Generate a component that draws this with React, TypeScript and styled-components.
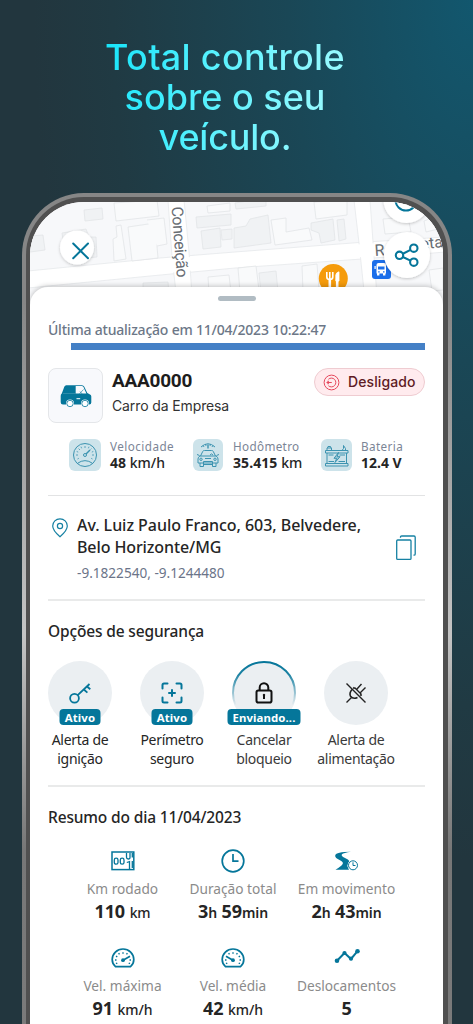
import React from "react";
import styled, { createGlobalStyle } from "styled-components";

const teal = "#05769a";
const noto = `"Noto Sans", sans-serif`;
const inter = `Inter, sans-serif`;
const roboto = `Roboto, sans-serif`;

const GlobalStyle = createGlobalStyle`
  * { box-sizing: border-box; }
  body { margin: 0; background: #22353d; }
`;

const Page = styled.main`
  height: 1024px;
  overflow: hidden;
  display: flex;
  flex-direction: column;
  background: radial-gradient(ellipse 440px 860px at 100% 0, #12576e 0%, #1a4756 42%, #203a43 82%, #22363e 100%);
  font-family: ${noto};
`;

const Headline = styled.h1`
  flex: none;
  margin: 37px 0 0;
  width: 450px;
  height: 156px;
  text-align: center;
  font-family: ${inter};
  font-weight: 500;
  font-size: 36px;
  line-height: 40px;

  span {
    display: block;
    width: 250px;
    margin: 0 auto;
    background: linear-gradient(100deg, #14e4fa 0%, #55f1fe 42%, #93f9ff 85%);
    -webkit-background-clip: text;
    background-clip: text;
    color: transparent;
  }
`;

const HeadlineLine = styled.div<{ $spacing: number }>`
  letter-spacing: ${(p) => p.$spacing}px;
  white-space: nowrap;
`;

const Phone = styled.section`
  width: 430px;
  height: 900px;
  flex: none;
  margin-left: 22px;
  padding: 4px;
  border-radius: 62px 62px 0 0;
  background: linear-gradient(#868686 0%, #868686 12%, #c4c4c4 49%, #777 73%, #7c7c7c 100%);
`;

const Bezel = styled.div`
  height: 100%;
  padding: 5px 5px 0 4px;
  border-radius: 58px 58px 0 0;
  background: #505050;
`;

const Screen = styled.div`
  width: 413px;
  height: 100%;
  overflow: hidden;
  border-radius: 54px 54px 0 0;
  background: #f7f8fa;
`;

const MapArea = styled.div`
  height: 85px;
  svg { display: block; }
`;

const Sheet = styled.div`
  position: relative;
  height: 800px;
  padding: 9px 18px 0;
  border-radius: 18px 18px 0 0;
  background: #fff;
  box-shadow: 0 -1px 5px rgba(0, 0, 0, 0.22);
`;

const Handle = styled.div`
  width: 38px;
  height: 5px;
  margin: 0 auto;
  border-radius: 3px;
  background: #b1bcc3;
`;

const Txt = styled.div<{
  $size: number;
  $line: number;
  $color?: string;
  $weight?: number;
  $ls?: number;
  $family?: string;
}>`
  font-family: ${(p) => p.$family ?? noto};
  font-size: ${(p) => p.$size}px;
  line-height: ${(p) => p.$line}px;
  color: ${(p) => p.$color ?? "#252525"};
  font-weight: ${(p) => p.$weight ?? 400};
  letter-spacing: ${(p) => p.$ls ?? 0}px;
  white-space: nowrap;
`;

const Updated = styled(Txt)`
  margin-top: 19px;
`;

const SyncBar = styled.div`
  height: 7px;
  margin: 3px 0 0 23px;
  background: #4480c6;
`;

const VehicleRow = styled.div`
  display: flex;
  margin-top: 18px;
  height: 55px;
`;

const VehicleTile = styled.div`
  width: 55px;
  height: 55px;
  display: grid;
  place-items: center;
  border: 1px solid #e4e6e9;
  border-radius: 8px;
  background: #f8f9fc;
`;

const VehicleInfo = styled.div`
  flex: 1;
  display: flex;
  flex-direction: column;
  gap: 3px;
  padding: 1px 0 0 9px;
`;

const Status = styled.div`
  width: 111px;
  height: 28px;
  display: flex;
  align-items: center;
  gap: 8px;
  padding-left: 8px;
  border: 1px solid #efccd1;
  border-radius: 14px;
  background: #ffebee;
`;

const Stats = styled.div`
  display: grid;
  grid-template-columns: 124px 127.5px 1fr;
  height: 32px;
  margin: 16px 0 0 21px;
`;

const Stat = styled.div`
  display: flex;
`;

const StatIcon = styled.div<{ $w: number }>`
  width: ${(p) => p.$w}px;
  height: 32px;
  margin-right: ${(p) => (p.$w === 30 ? 10 : 9)}px;
  border-radius: 6px;
  background: #cde3ea;
  svg { display: block; }
`;

const StatUnit = styled.span`
  font-weight: 500;
`;

const Divider = styled.hr<{ $top: number; $h: number }>`
  height: ${(p) => p.$h}px;
  margin: ${(p) => p.$top}px 0 0;
  border: 0;
  background: ${(p) => (p.$h > 1 ? "#e9eaea" : "#e2e3e4")};
`;

const Location = styled.div`
  display: flex;
  height: 85px;
  padding-top: 18px;
`;

const PinBox = styled.div`
  width: 29px;
  padding: 4px 0 0 4px;
`;

const AddressText = styled.div`
  flex: 1;
`;

const Coordinates = styled(Txt)`
  margin-top: 5px;
`;

const CopyBox = styled.div`
  width: 30px;
  padding-top: 21px;
`;

const Heading = styled(Txt)`
  margin-top: 19px;
`;

const Security = styled.div`
  display: grid;
  grid-template-columns: repeat(4, 92px);
  margin: 19px 0 0 -14px;
`;

const Option = styled.div`
  display: flex;
  flex-direction: column;
  align-items: center;
  text-align: center;
`;

const Disc = styled.div`
  position: relative;
  width: 64px;
  height: 64px;
  margin-bottom: 5px;
  display: grid;
  place-items: center;
  border-radius: 50%;
  background: #ebeff2;
`;

const Ring = styled.svg`
  position: absolute;
  inset: 0;
`;

const Tag = styled.span<{ $w: number }>`
  position: absolute;
  bottom: 0;
  left: 50%;
  width: ${(p) => p.$w}px;
  height: 16px;
  transform: translateX(-50%);
  border-radius: 4px;
  background: ${teal};
  color: #fff;
  font-size: 11.4px;
  font-weight: 700;
  line-height: 17px;
  letter-spacing: 0.1px;
`;

const Summary = styled.div`
  display: grid;
  grid-template-columns: 111px 110px 117px;
  row-gap: 20.5px;
  margin: 21px 0 0 19px;
`;

const Metric = styled.div`
  display: flex;
  flex-direction: column;
  align-items: center;
`;

const MetricIcon = styled.div`
  height: 24px;
  margin-bottom: 6px;
  display: grid;
  place-items: center;
`;

const Unit = styled.span<{ $w: number }>`
  font-size: 14px;
  font-weight: ${(p) => p.$w};
`;

const MapDrawing = () => (
  <svg width="413" height="112" viewBox="30 202 413 112">
    <defs>
      <filter id="soft" x="-30%" y="-30%" width="160%" height="160%">
        <feDropShadow dx="0" dy="1" stdDeviation="1.6" floodOpacity="0.22" />
      </filter>
    </defs>
    <rect x="30" y="202" width="413" height="112" fill="#f7f8fa" />
    <g fill="#fff" stroke="#e6e8eb" strokeWidth="0.8">
      <path d="M28 271L160 258L235 252L359 242.500L445 237V252L362 259L235 268L150 276L28 288Z" />
      <path d="M168 200L172 257L178 310H193L189 252L184 200Z" />
      <path d="M354 200L359 243L366 310H378L374 256L370 200Z" />
    </g>
    <path d="M30 272.500L160 259.500L235 253.500L445 238V251L235 266.500L150 274.500L30 286.500Z" fill="#fff" />
    <g fill="#f0f2f4" stroke="#e2e4e7" strokeWidth="0.8">
      <path d="M84 210L102 208L103 219L85 221Z" />
      <path d="M30 236L43 235L45 250L30 252Z" />
      <path d="M62 233L86 229L89 237L96 237L97 257L66 260Z" />
      <path d="M196 217L231 214V225L197 228Z" />
      <path d="M201 231L220 228L221 247L203 249Z" />
      <path d="M221 230L232 229V239L222 240Z" />
      <path d="M234 228L246 226L250 219L268 215L271 243L234 248Z" />
      <path d="M311 223L333 219L335 240L321 243L319 233L311 230Z" />
      <path d="M337 220L344 219L346 239L339 241Z" />
      <path d="M143 283L168 282L169 296L143 298Z" />
      <path d="M259 273L276 271L278 292L261 293Z" />
      <path d="M235 203L254 200L266 200V206L236 209Z" />
    </g>
    <g fill="#f9fafb" stroke="#e2e4e7" strokeWidth="0.8">
      <path d="M114 203L157 200L159 216L116 221Z" />
      <path d="M116 226L121 225L126 259L114 261L113 239L117 237Z" />
      <path d="M128 227L155 223L158 258L132 261Z" />
      <path d="M147 220L164 218L167 244L157 246" />
      <path d="M207 206L230 203V211L208 213Z" />
      <path d="M271 220L286 218V232L309 228L312 240L275 245Z" />
      <path d="M314 202L347 200V215L316 219Z" />
      <path d="M208 277L229 275L231 292L209 293Z" />
      <path d="M238 268L256 266L259 290L240 292Z" />
      <path d="M302 266L317 264L319 290L303 291Z" />
      <path d="M383 219L408 217L411 232L385 234Z" />
      <path d="M429 270L443 268V290L432 291Z" />
      <path d="M424 221L434 217L438 229L426 232Z" />
    </g>
    <text
      transform="translate(171.500 207) rotate(85.500)"
      fontFamily="Roboto, sans-serif"
      fontSize="16"
      fill="#686d73"
      stroke="#fff"
      strokeWidth="2"
      paintOrder="stroke"
      textLength="71"
    >
      Conceição
    </text>
    <g fontFamily="Roboto, sans-serif" fontSize="16" fill="#686d73">
      <text transform="translate(375 256) rotate(-4)">R</text>
      <text transform="translate(421 249.500) rotate(-6)">eta</text>
    </g>
    <rect x="372" y="260" width="19" height="19" rx="3" fill="#1a6eea" />
    <g fill="#fff">
      <path d="M376.500 265q0-2 2-2h5.500q2 0 2 2v8.500h-9.500z" />
      <rect x="377" y="273" width="2.400" height="2.500" />
      <rect x="383" y="273" width="2.400" height="2.500" />
      <path d="M374.500 266h1.200v3h-1.200z" />
    </g>
    <path d="M378 266.500h6.500v3h-6.500zM378.200 271.200h1.500v1.200h-1.500zM383 271.200h1.500v1.200H383z" fill="#1a6eea" />
    <circle cx="333.300" cy="278.500" r="14.500" fill="#f59b0b" />
    <g stroke="#fff" fill="none">
      <path d="M326.800 272v5q0 2.500 3 2.500t3-2.500v-5M329.800 272v18" strokeWidth="1.600" />
      <path d="M329.800 279v12M337.200 279v12" strokeWidth="2.600" />
      <path d="M335.800 281v-6q.3-2.500 3.200-3.200v9.200z" fill="#fff" strokeWidth="0.800" />
    </g>
    <g fill="#fff" filter="url(#soft)">
      <circle cx="77" cy="247.500" r="17" />
      <circle cx="406.500" cy="200" r="23" />
      <circle cx="407" cy="255" r="23" />
    </g>
    <path d="M73.200 243.500L88 258.300M88 243.500L73.200 258.300" stroke={teal} strokeWidth="2" strokeLinecap="round" />
    <circle cx="406" cy="200" r="10.500" fill="none" stroke={teal} strokeWidth="2" />
    <g fill="none" stroke={teal} strokeWidth="2.100">
      <circle cx="399.500" cy="255.300" r="3.700" />
      <circle cx="413.800" cy="248.200" r="3.700" />
      <circle cx="413.800" cy="262.200" r="3.700" />
      <path d="M402.900 253.700L410.500 249.900M402.900 257L410.500 260.600" />
    </g>
  </svg>
);

const VanIcon = () => (
  <svg width="32" height="24" viewBox="0 0 32 24">
    <path
      d="M1.800 9.500L4.300 2.800Q4.800 1.200 6.300 1.200H22Q23.500 1.200 24.300 2.700L27.300 9L30 10.400Q31.300 11 31.300 12.600V18.500Q31.300 20.500 29.300 20.500H3Q.7 20.500.7 18.300V12Q.7 10 1.800 9.500Z"
      fill={teal}
    />
    <path d="M15.700 2H21.700Q22.800 2 23.500 3.300L26.400 9.500H15.700Z" fill="#f8f9fc" />
    <path d="M19.500 9.800L23.500 5.500M20 7.500L22 9.800" stroke={teal} strokeWidth="0.600" />
    <path d="M16.500 14.700H20.200" stroke="#fff" strokeWidth="1" />
    <path d="M3 9.800H15.500" stroke="#fff" strokeWidth="0.400" opacity=".6" />
    <g fill="#f8f9fc">
      <circle cx="10" cy="19.500" r="4" />
      <circle cx="25" cy="19.500" r="4" />
    </g>
    <g fill="#fff" stroke={teal} strokeWidth="0.800">
      <circle cx="10" cy="19.500" r="3.200" />
      <circle cx="25" cy="19.500" r="3.200" />
    </g>
  </svg>
);

const IgnitionOffIcon = () => (
  <svg width="17" height="17" viewBox="0 0 17 17" fill="none" stroke="#e5485d" strokeWidth="1">
    <circle cx="8.500" cy="8.500" r="7.400" />
    <path d="M5.400 5.300A4.400 4.400 0 1 1 5.400 11.700M3.500 8.500H8.800M4.300 7.300H6M4.300 9.700H6" />
  </svg>
);

const SpeedIcon = () => (
  <svg width="32" height="32" viewBox="0 0 32 32" fill="none" stroke="#3c93b0" strokeWidth="1">
    <circle cx="16" cy="16" r="11.500" />
    <path d="M8.500 24.300Q16 19 23.500 24.300" />
    <path d="M17 15L21 11" strokeWidth="1.500" />
    <circle cx="16" cy="16" r="1.500" />
    <path d="M16 7v2M7 16h2M23 16h2M9.600 9.600l1.400 1.400M22.400 9.600L21.500 10.500M12 7.700l.6 1.600M20 7.700l-.6 1.600M7.700 12.500l1.500.6M24.300 12.500l-1.500.6M8.500 20l1.300-.7M23.500 20l-1.300-.7" strokeWidth="0.800" />
  </svg>
);

const OdometerCarIcon = () => (
  <svg width="30" height="32" viewBox="0.500 0 30 32" fill="none" stroke="#3c93b0" strokeWidth="1">
    <path d="M8.500 8Q15.500 1.500 22.500 8M10.500 6.500l1 1.400M13 5.200l.5 1.700M18 5.200l-.5 1.700M20.500 6.500l-1 1.400" />
    <path d="M15.500 5.500V9.500" strokeWidth="1.400" />
    <path d="M8 17L10.300 12.300Q10.700 11.500 12 11.500H19Q20.300 11.500 20.700 12.300L23 17M7.500 17H23.500Q25.500 18 25.500 20V24H5.500V20Q5.500 18 7.500 17Z" />
    <path d="M7.500 24V27.500H11V24M20 24V27.500H23.500V24M11 22.500H20V25.500H11Z" />
    <circle cx="8.500" cy="20.300" r="1.200" />
    <circle cx="22.500" cy="20.300" r="1.200" />
    <path d="M4.500 15.500L7 16.500M26.500 15.500L24 16.500M17.500 16Q19 13.800 20.500 16M12.500 19.500H18.500" />
  </svg>
);

const BatteryIcon = () => (
  <svg width="32" height="32" viewBox="0 0 32 32" fill="none" stroke="#3c93b0" strokeWidth="1">
    <path d="M4.500 11.500H27V14H4.500ZM6 14V24.500M25.500 14V24.500M4.500 24.500H27V27H4.500ZM7.500 16H12.500M18.500 16H24M7.500 22.500H13M17.500 22.500H24" />
    <path d="M6 11.500V9H10.500V11.500M21 11.500L22.500 9.500V6.500L24.500 9.500V11.500M6.500 9L7 7.500H9.500L10 9" />
    <path d="M17.500 13.500L13 19.300H15.700L14 23.500L19 17.700H16.200Z" fill="#9fcbd9" />
  </svg>
);

const PinIcon = () => (
  <svg width="16" height="20" viewBox="0 0 16 20" fill="none" stroke="#1681a3" strokeWidth="1.200">
    <path d="M8 18.700Q.7 12.500.7 8A7.300 7.200 0 0 1 15.300 8Q15.300 12.500 8 18.700Z" />
    <circle cx="8" cy="8" r="2.600" />
  </svg>
);

const CopyIcon = () => (
  <svg width="22" height="26" viewBox="0 0 22 26" fill="none" stroke="#1681a3" strokeWidth="1.300">
    <rect x="1.700" y="5" width="14.300" height="19.400" rx="1" />
    <path d="M5.500 2.800V2.200Q5.500 1 6.700 1H19Q20.200 1 20.200 2.200V19Q20.200 20.200 19 20.200H18.500" />
  </svg>
);

const KeyIcon = () => (
  <svg width="24" height="24" viewBox="0 0 24 24" fill="none" stroke={teal} strokeWidth="1.800">
    <circle cx="6.500" cy="17.300" r="4.400" />
    <path d="M9.700 14.100L21.500 3M15.800 8.500L19.400 11.600M19 5.500L22.300 8.300" />
  </svg>
);

const ScanIcon = () => (
  <svg width="24" height="24" viewBox="0 0 24 24" fill="none" stroke={teal} strokeWidth="2" strokeLinecap="round">
    <path d="M2.500 7.500V4Q2.500 2.500 4 2.500H7.500M16.500 2.500H20Q21.500 2.500 21.500 4V7.500M21.500 16.500V20Q21.500 21.500 20 21.500H16.500M7.500 21.500H4Q2.500 21.500 2.500 20V16.500M12 9V15M9 12H15" />
  </svg>
);

const LockIcon = () => (
  <svg width="18" height="22" viewBox="0 0 18 22" fill="none" stroke="#111" strokeWidth="2">
    <rect x="1.500" y="8.500" width="15" height="12" rx="1.800" />
    <path d="M4.700 8V5.500A4.300 4.300 0 0 1 13.300 5.500V8" />
    <path d="M9 12.500V17" />
    <circle cx="9" cy="13" r=".8" fill="#111" strokeWidth="1" />
  </svg>
);

const PlugOffIcon = () => (
  <svg width="22" height="22" viewBox="0 0 22 22" fill="none" stroke="#222" strokeWidth="1.400">
    <path d="M1.500 1.500L20.500 20.500M1.500 20.500L6.500 15.500M9.500 5.500L16.500 12.500M12 7L16.500 2M15.500 10.500L20.500 5.500" />
    <path d="M7 7.500Q4 11 5.500 14.200Q8 17.500 12.500 15.500" strokeWidth="1.600" />
    <path d="M9.500 5.500L8.300 6.700M16.500 12.500L15.300 13.700" strokeWidth="1.800" />
  </svg>
);

const CounterIcon = () => (
  <svg width="24" height="20" viewBox="0 0 24 20" fill="none" stroke={teal} strokeWidth="1.300">
    <rect x="1" y="1" width="21.800" height="17.600" strokeWidth="1.500" />
    <rect x="3.300" y="7.200" width="3.700" height="6" rx="1.800" />
    <rect x="9.300" y="7.200" width="3.700" height="6" rx="1.800" />
    <path d="M15.500 2V6.200Q15.500 8 17.300 8T19 6.200V2M15.800 11.500L18.500 10.700V18M21.300 2V6.500M21.300 10V17" />
  </svg>
);

const ClockIcon = () => (
  <svg width="24" height="24" viewBox="0 0 24 24" fill="none" stroke={teal} strokeWidth="1.700">
    <circle cx="12" cy="12" r="10.800" />
    <path d="M12 5V12.200H17.500" />
  </svg>
);

const RoadIcon = () => (
  <svg width="25" height="20" viewBox="0 0 25 20">
    <path
      d="M17 .8Q2 .8 1.200 4.500Q.8 7 6 9.200Q11 11.500 7.500 14.500Q4.500 17 1.500 18.800H15L13.500 15.500Q14 11.500 15.500 10.300Q14.500 8.500 11 7Q6.500 5 8 3.300Q9.500 1.800 17 .8Z"
      fill={teal}
    />
    <circle cx="19" cy="14.300" r="5.400" fill="#fff" />
    <g fill="none" stroke={teal} strokeWidth="1">
      <circle cx="19" cy="14.300" r="4.500" />
      <path d="M19 11.300V14.500H21.500" />
    </g>
  </svg>
);

const GaugeIcon = ({ flip }: { flip?: boolean }) => (
  <svg width="24" height="20" viewBox="0 0 24 20" fill="none" stroke={teal}>
    <g transform={flip ? "translate(24 0) scale(-1 1)" : undefined}>
      <path d="M4.500 18.600Q1.200 15.800 1.200 11.500A10.800 10.500 0 0 1 22.800 11.500Q22.800 15.800 19.500 18.600Z" strokeWidth="1.700" strokeLinejoin="round" />
      <path d="M12.500 12L19 8.300" strokeWidth="1.700" />
      <circle cx="12" cy="12.200" r="1.900" fill={teal} stroke="none" />
      <path d="M4 12H5.500M18.500 12H20M5 8.200L6.300 8.900M7.600 5.200L8.500 6.400M12 4.200V5.700M16.400 5.200L15.500 6.400M5 15.700L6.300 15M19 15.700L17.700 15" strokeWidth="1.400" />
    </g>
  </svg>
);

const TrendIcon = () => (
  <svg width="26" height="20" viewBox="0 0 26 20" fill={teal}>
    <path d="M3 12.700L10.500 5L17 11L23.500 3.200" fill="none" stroke={teal} strokeWidth="2" />
    <circle cx="3" cy="12.700" r="2.300" />
    <circle cx="10.500" cy="5" r="2.100" />
    <circle cx="17" cy="10.700" r="2.100" />
    <circle cx="23.500" cy="3.200" r="2.300" />
  </svg>
);

type MetricProps = { icon: React.ReactNode; label: string; children: React.ReactNode };

const MetricItem = ({ icon, label, children }: MetricProps) => (
  <Metric>
    <MetricIcon>{icon}</MetricIcon>
    <Txt $size={13.7} $line={20} $color="#8b8b8b">{label}</Txt>
    <Txt $size={18} $line={24} $weight={700} $ls={-0.1}>{children}</Txt>
  </Metric>
);

export default function App() {
  return (
    <Page>
      <GlobalStyle />
      <Headline>
        <span>
          <HeadlineLine $spacing={0.3}>Total controle</HeadlineLine>
          <HeadlineLine $spacing={0}>sobre o seu</HeadlineLine>
          <HeadlineLine $spacing={-0.2}>veículo.</HeadlineLine>
        </span>
      </Headline>
      <Phone>
        <Bezel>
          <Screen>
            <MapArea><MapDrawing /></MapArea>
            <Sheet>
              <Handle />
              <Updated $size={14} $line={20} $weight={500} $color="#6c7787" $ls={-0.21}>
                Última atualização em 11/04/2023 10:22:47
              </Updated>
              <SyncBar />
              <VehicleRow>
                <VehicleTile><VanIcon /></VehicleTile>
                <VehicleInfo>
                  <Txt $family={roboto} $size={19} $line={24} $weight={700} $color="#1d1d1d" $ls={-0.25}>AAA0000</Txt>
                  <Txt $family={inter} $size={14} $line={20} $color="#333" $ls={-0.12}>Carro da Empresa</Txt>
                </VehicleInfo>
                <Status>
                  <IgnitionOffIcon />
                  <Txt $family={inter} $size={14} $line={20} $weight={500} $color="#5e1b24" $ls={0.1}>Desligado</Txt>
                </Status>
              </VehicleRow>
              <Stats>
                <Stat>
                  <StatIcon $w={32}><SpeedIcon /></StatIcon>
                  <div>
                    <Txt $size={11.7} $line={14.5} $color="#7b8596" $ls={0.45}>Velocidade</Txt>
                    <Txt $size={14} $line={18} $weight={700}>48 <StatUnit>km/h</StatUnit></Txt>
                  </div>
                </Stat>
                <Stat>
                  <StatIcon $w={30}><OdometerCarIcon /></StatIcon>
                  <div>
                    <Txt $size={11.7} $line={14.5} $color="#7b8596" $ls={0.35}>Hodômetro</Txt>
                    <Txt $size={14} $line={18} $weight={700} $ls={0.08}>35.415 <StatUnit>km</StatUnit></Txt>
                  </div>
                </Stat>
                <Stat>
                  <StatIcon $w={31.5}><BatteryIcon /></StatIcon>
                  <div>
                    <Txt $size={11.7} $line={14.5} $color="#7b8596" $ls={0.4}>Bateria</Txt>
                    <Txt $size={14} $line={18} $weight={700}>12.4 V</Txt>
                  </div>
                </Stat>
              </Stats>
              <Divider $top={24} $h={1} />
              <Location>
                <PinBox><PinIcon /></PinBox>
                <AddressText>
                  <Txt $size={16} $line={22} $weight={500} $ls={-0.04}>Av. Luiz Paulo Franco, 603, Belvedere,</Txt>
                  <Txt $size={16} $line={22} $weight={500} $ls={-0.1}>Belo Horizonte/MG</Txt>
                  <Coordinates $size={13.6} $line={20} $color="#6b7489">-9.1822540, -9.1244480</Coordinates>
                </AddressText>
                <CopyBox><CopyIcon /></CopyBox>
              </Location>
              <Divider $top={18} $h={2} />
              <Heading $size={15.5} $line={22} $weight={500} $ls={-0.15}>Opções de segurança</Heading>
              <Security>
                <Option>
                  <Disc><KeyIcon /><Tag $w={41}>Ativo</Tag></Disc>
                  <Txt $size={14} $line={19} $ls={-0.3}>Alerta de<br />ignição</Txt>
                </Option>
                <Option>
                  <Disc><ScanIcon /><Tag $w={41}>Ativo</Tag></Disc>
                  <Txt $size={14} $line={19} $ls={-0.3}>Perímetro<br />seguro</Txt>
                </Option>
                <Option>
                  <Disc>
                    <Ring width="64" height="64" viewBox="0 0 64 64">
                      <defs>
                        <linearGradient id="ring" x1="0" y1="0" x2="0" y2="1">
                          <stop offset="0" stopColor={teal} />
                          <stop offset="0.2" stopColor={teal} stopOpacity=".9" />
                          <stop offset="0.7" stopColor={teal} stopOpacity="0" />
                        </linearGradient>
                      </defs>
                      <circle cx="32" cy="32" r="31" fill="none" stroke="url(#ring)" strokeWidth="2" />
                    </Ring>
                    <LockIcon />
                    <Tag $w={73}>Enviando...</Tag>
                  </Disc>
                  <Txt $size={14} $line={19} $color="#3a3a3a" $ls={-0.3}>Cancelar<br />bloqueio</Txt>
                </Option>
                <Option>
                  <Disc><PlugOffIcon /></Disc>
                  <Txt $size={14} $line={19} $color="#3a3a3a" $ls={-0.3}>Alerta de<br />alimentação</Txt>
                </Option>
              </Security>
              <Divider $top={17} $h={2} />
              <Heading $size={15.5} $line={22} $weight={500} $ls={-0.15}>Resumo do dia 11/04/2023</Heading>
              <Summary>
                <MetricItem icon={<CounterIcon />} label="Km rodado">110 <Unit $w={500}>km</Unit></MetricItem>
                <MetricItem icon={<ClockIcon />} label="Duração total">3<Unit $w={600}>h</Unit> 59<Unit $w={600}>min</Unit></MetricItem>
                <MetricItem icon={<RoadIcon />} label="Em movimento">2<Unit $w={600}>h</Unit> 43<Unit $w={600}>min</Unit></MetricItem>
                <MetricItem icon={<GaugeIcon />} label="Vel. máxima">91 <Unit $w={500}>km/h</Unit></MetricItem>
                <MetricItem icon={<GaugeIcon flip />} label="Vel. média">42 <Unit $w={500}>km/h</Unit></MetricItem>
                <MetricItem icon={<TrendIcon />} label="Deslocamentos">5</MetricItem>
              </Summary>
            </Sheet>
          </Screen>
        </Bezel>
      </Phone>
    </Page>
  );
}
